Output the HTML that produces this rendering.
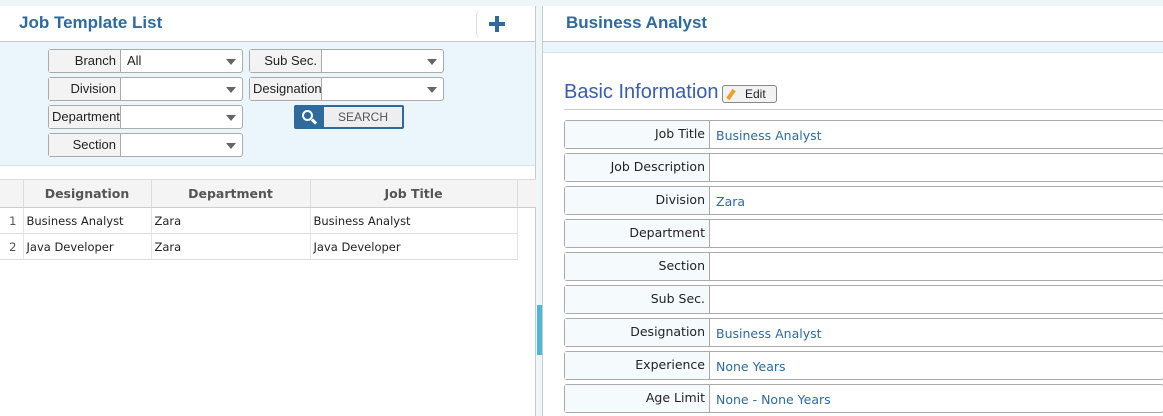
<!DOCTYPE html>
<html><head><style>
*{box-sizing:border-box;margin:0;padding:0}
body{width:1163px;height:416px;overflow:hidden;background:#eef6fa;font-family:"Liberation Sans","DejaVu Sans",sans-serif;font-size:13px;color:#222;position:relative}
.abs{position:absolute}
.lp{left:0;top:6px;width:536px;height:410px;background:#fff;border-right:1px solid #ccc}
.hdr{height:36px;border-bottom:1px solid #c8c8c8;background:#fff}
.title{color:#2e6a9e;font-weight:bold;font-size:17px;font-family:"Liberation Sans",sans-serif}
.filt{left:0;top:36px;width:535px;height:124px;background:#eaf6fc;border-bottom:1px solid #d4e4ec}
.fld{position:absolute;height:24px;border:1px solid #aaa;border-radius:3px;background:#fff;display:flex}
.fld .l{background:#f3f3f3;border-right:1px solid #aaa;text-align:right;padding-right:4px;line-height:22px;font-size:13px;overflow:hidden;white-space:nowrap}
.fld .v{flex:1;position:relative;line-height:22px;padding-left:6px;font-size:13px}
.fld .v:after{content:"";position:absolute;right:6px;top:9px;border:5px solid transparent;border-top:6px solid #666;border-bottom:0}
table{border-collapse:collapse}
.grid td{font-size:11.5px;font-family:"DejaVu Sans",sans-serif;border-bottom:1px solid #ddd;border-right:1px solid #e4e4e4;height:26px;padding-left:3px;white-space:nowrap}
.grid th{background:#f4f4f4;color:#555;font-size:12.5px;font-family:"DejaVu Sans",sans-serif;border-right:1px solid #ddd;border-bottom:1px solid #ccc;border-top:1px solid #ddd;height:28px}
.rp{left:542px;top:6px;width:621px;height:410px;background:#fff;border-left:1px solid #ccc}
.row{position:absolute;left:21px;width:600px;height:29px;border:1px solid #aaa;border-radius:3px;display:flex;font-family:"DejaVu Sans",sans-serif;font-size:12.5px}
.row .l{width:145px;background:#f5fafd;border-right:1px solid #aaa;text-align:right;padding-right:4px;line-height:26px}
.row .v{flex:1;padding-left:6px;line-height:30px;color:#2e6a9e}
</style></head><body>
<div class="abs lp">
 <div class="hdr"><div class="abs title" style="left:19px;top:7px">Job Template List</div>
 <div class="abs" style="left:476px;top:4px;width:40px;height:28px;border-left:1px solid #ddd;border-radius:6px 0 0 6px"></div>
 <div class="abs" style="left:489px;top:16px;width:16px;height:4px;background:#2e6a9e"></div>
 <div class="abs" style="left:495px;top:10px;width:4px;height:16px;background:#2e6a9e"></div></div>
 <div class="abs filt">
  <div class="fld" style="left:48px;top:7px;width:195px"><div class="l" style="width:72px">Branch</div><div class="v">All</div></div>
  <div class="fld" style="left:48px;top:35px;width:195px"><div class="l" style="width:72px">Division</div><div class="v"></div></div>
  <div class="fld" style="left:48px;top:63px;width:195px"><div class="l" style="width:72px;text-align:left;padding-left:3px">Department</div><div class="v"></div></div>
  <div class="fld" style="left:48px;top:91px;width:195px"><div class="l" style="width:72px">Section</div><div class="v"></div></div>
  <div class="fld" style="left:249px;top:7px;width:195px"><div class="l" style="width:72px">Sub Sec.</div><div class="v"></div></div>
  <div class="fld" style="left:249px;top:35px;width:195px"><div class="l" style="width:72px;text-align:left;padding-left:3px">Designation</div><div class="v"></div></div>
  <div class="abs" style="left:294px;top:63px;width:110px;height:24px;border:2px solid #2e6a9e;border-radius:2px;background:#eee;display:flex">
   <div style="width:28px;background:#2e6a9e;position:relative"><div class="abs" style="left:6px;top:3px;width:11px;height:11px;border:2.5px solid #fff;border-radius:50%"></div><div class="abs" style="left:15px;top:13px;width:6px;height:3px;background:#fff;transform:rotate(45deg)"></div></div>
   <div style="flex:1;text-align:center;line-height:20px;font-size:12px;color:#555">SEARCH</div></div>
 </div>
 <table class="grid abs" style="left:0;top:173px;width:536px">
  <tr><th style="width:23px"></th><th style="width:128px">Designation</th><th style="width:159px">Department</th><th style="width:207px">Job Title</th><th style="border-right:0"></th></tr>
  <tr><td style="text-align:center;color:#555">1</td><td>Business Analyst</td><td>Zara</td><td>Business Analyst</td><td style="border:0"></td></tr>
  <tr><td style="text-align:center;color:#555">2</td><td>Java Developer</td><td>Zara</td><td>Java Developer</td><td style="border:0"></td></tr>
 </table>
</div>
<div class="abs" style="left:537px;top:305px;width:5px;height:50px;background:#4eb6d8"></div>
<div class="abs rp">
 <div class="hdr"><div class="abs title" style="left:23px;top:7px">Business Analyst</div></div>
 <div class="abs" style="left:0;top:36px;width:621px;height:11px;background:#eaf6fc;border-bottom:1px solid #d4e4ec"></div>
 <div class="abs" style="left:21px;top:75px;color:#3a5db0;font-size:20px;font-family:'Liberation Sans',sans-serif">Basic Information</div>
 <div class="abs" style="left:179px;top:79px;width:55px;height:18px;border:1px solid #888;border-radius:3px;background:#f2f2f2;font-size:12px;line-height:16px;padding-left:22px">Edit<span class="abs" style="left:6px;top:3px;width:4px;height:11px;background:#f0a020;transform:rotate(35deg)"></span></div>
 <div class="abs" style="left:21px;top:103px;width:600px;height:1px;background:#ccc"></div>
 <div class="row" style="top:114px"><div class="l">Job Title</div><div class="v">Business Analyst</div></div>
 <div class="row" style="top:147px"><div class="l">Job Description</div><div class="v"></div></div>
 <div class="row" style="top:180px"><div class="l">Division</div><div class="v">Zara</div></div>
 <div class="row" style="top:213px"><div class="l">Department</div><div class="v"></div></div>
 <div class="row" style="top:246px"><div class="l">Section</div><div class="v"></div></div>
 <div class="row" style="top:279px"><div class="l">Sub Sec.</div><div class="v"></div></div>
 <div class="row" style="top:312px"><div class="l">Designation</div><div class="v">Business Analyst</div></div>
 <div class="row" style="top:345px"><div class="l">Experience</div><div class="v">None Years</div></div>
 <div class="row" style="top:378px"><div class="l">Age Limit</div><div class="v">None - None Years</div></div>
</div>
</body></html>
